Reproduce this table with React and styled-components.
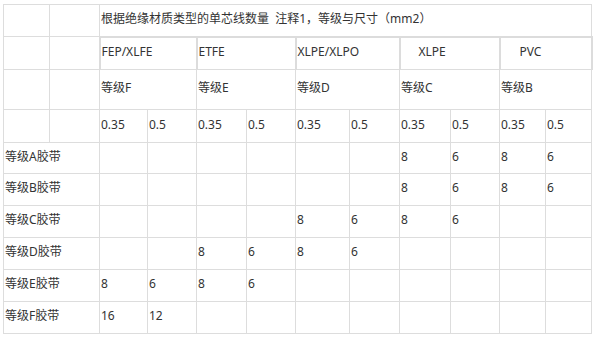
import React from 'react';
import styled, { createGlobalStyle } from 'styled-components';

const GlobalStyle = createGlobalStyle`
	body {
		margin: 0;
		background: #ffffff;
		font-family: "Noto Sans", "Noto Sans CJK SC", sans-serif;
		color: #333333;
	}
`;

const Page = styled.div`
	padding: 4px 0 0 3px;
`;

const Table = styled.table`
	border-collapse: collapse;
	table-layout: fixed;
	width: 589px;
	font-size: 12px;
	line-height: 16px;
`;

const Row = styled.tr`
	height: ${(p) => p.$h}px;
`;

const Cell = styled.td`
	border: 1px solid #dddddd;
	padding: 0 0 3px ${(p) => p.$indent || 1}px;
	vertical-align: middle;
	white-space: nowrap;
	overflow: hidden;
`;

const GroupCell = styled(Cell)`
	border-top: 2px solid #dcdcdc;
	border-left: 2px solid #dcdcdc;
	border-right: 2px solid #dcdcdc;
`;

const widths = [46, 50, 48, 49, 50, 49, 54, 50, 51, 49, 46, 46];

const groups = [
	{ name: 'FEP/XLFE', grade: '等级F' },
	{ name: 'ETFE', grade: '等级E' },
	{ name: 'XLPE/XLPO', grade: '等级D' },
	{ name: 'XLPE', grade: '等级C', indent: 18 },
	{ name: 'PVC', grade: '等级B', indent: 19 },
];

// values per tape grade, indexed by column 0..9 after the label
const rows = [
	{ label: '等级A胶带', h: 31, vals: { 6: '8', 7: '6', 8: '8', 9: '6' } },
	{ label: '等级B胶带', h: 32, vals: { 6: '8', 7: '6', 8: '8', 9: '6' } },
	{ label: '等级C胶带', h: 32, vals: { 4: '8', 5: '6', 6: '8', 7: '6' } },
	{ label: '等级D胶带', h: 32, vals: { 2: '8', 3: '6', 4: '8', 5: '6' } },
	{ label: '等级E胶带', h: 32, vals: { 0: '8', 1: '6', 2: '8', 3: '6' } },
	{ label: '等级F胶带', h: 32, vals: { 0: '16', 1: '12' } },
];

export default function App() {
	return (
		<Page>
			<GlobalStyle />
			<Table>
				<colgroup>
					{widths.map((w, i) => (
						<col key={i} style={{ width: w }} />
					))}
				</colgroup>
				<tbody>
					<Row $h={32}>
						<Cell />
						<Cell />
						<Cell colSpan={10}>根据绝缘材质类型的单芯线数量&nbsp; 注释1，等级与尺寸（mm2）</Cell>
					</Row>
					<Row $h={33}>
						<Cell />
						<Cell />
						{groups.map((g) => (
							<GroupCell key={g.name + g.grade} colSpan={2} $indent={g.indent}>
								{g.name}
							</GroupCell>
						))}
					</Row>
					<Row $h={40}>
						<Cell />
						<Cell />
						{groups.map((g) => (
							<Cell key={g.grade} colSpan={2}>
								{g.grade}
							</Cell>
						))}
					</Row>
					<Row $h={33}>
						<Cell />
						<Cell />
						{groups.map((g) => (
							<React.Fragment key={g.grade}>
								<Cell>0.35</Cell>
								<Cell>0.5</Cell>
							</React.Fragment>
						))}
					</Row>
					{rows.map((r) => (
						<Row key={r.label} $h={r.h}>
							<Cell colSpan={2}>{r.label}</Cell>
							{Array.from({ length: 10 }, (_, i) => (
								<Cell key={i}>{r.vals[i] || ''}</Cell>
							))}
						</Row>
					))}
				</tbody>
			</Table>
		</Page>
	);
}
